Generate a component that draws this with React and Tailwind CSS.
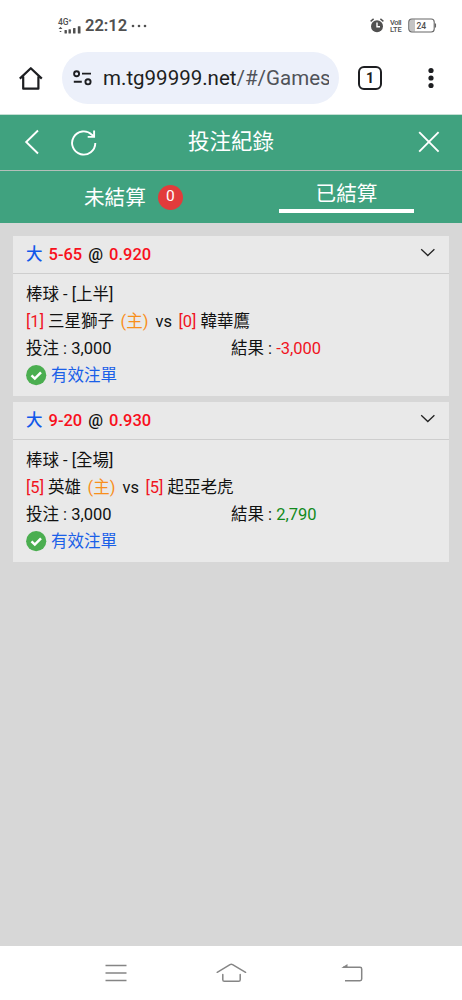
import React from "react";

const bets = [
  {
    line: "5-65",
    odds: "0.920",
    league: "棒球 - [上半]",
    homeScore: "[1]",
    home: "三星獅子",
    awayScore: "[0]",
    away: "韓華鷹",
    stake: "3,000",
    result: "-3,000",
    won: false,
  },
  {
    line: "9-20",
    odds: "0.930",
    league: "棒球 - [全場]",
    homeScore: "[5]",
    home: "英雄",
    awayScore: "[5]",
    away: "起亞老虎",
    stake: "3,000",
    result: "2,790",
    won: true,
  },
];

function StatusBar() {
  return (
    <div className="flex h-[52px] shrink-0 items-center justify-between pr-[25px] pb-[1px] pl-[58px] text-[#505050]">
      <div className="flex items-center">
        <div className="flex w-[24px] flex-col">
          <span className="h-[8px] text-[8.5px] leading-[8px] font-medium tracking-[-0.2px]">4G⁺</span>
          <svg width="24" height="8" viewBox="0 0 24 8" fill="currentColor">
            <path d="M.5 3 2.5.8 4.5 3zM1.7 5h1.6v1H1.7z" />
            <rect x="6.5" y="4" width="2.4" height="3.5" rx=".5" />
            <rect x="10.5" y="3.2" width="2.4" height="4.3" rx=".5" />
            <rect x="15" y="2" width="2.5" height="5.5" rx=".5" />
            <rect x="19.8" y=".3" width="2.7" height="7.2" rx=".5" />
          </svg>
        </div>
        <span className="ml-[3px] text-[16.5px] leading-5 font-semibold">22:12</span>
        <svg className="ml-[4px]" width="16" height="4" viewBox="0 0 16 4" fill="currentColor">
          <circle cx="2" cy="2" r="1.3" />
          <circle cx="8" cy="2" r="1.3" />
          <circle cx="14" cy="2" r="1.3" />
        </svg>
      </div>
      <div className="flex items-center">
        <svg width="14" height="15" viewBox="0 0 14 15" fill="none">
          <circle cx="7" cy="8.2" r="6" fill="currentColor" />
          <path d="M.6 3.4 3.6.9M13.4 3.4 10.4.9" stroke="currentColor" strokeWidth="1.4" />
          <path d="M7 4.5v4.2h3" stroke="#fff" strokeWidth="1.4" />
        </svg>
        <div className="ml-[6px] flex w-[14px] flex-col text-[7.5px] leading-[7px] font-medium">
          <span className="tracking-[-0.5px]">VoII</span>
          <span className="tracking-[-0.1px]">LTE</span>
        </div>
        <svg className="ml-[4px]" width="29" height="15" viewBox="0 0 29 15">
          <rect x="1.5" y="1.5" width="5.5" height="12" fill="#c4c4c4" />
          <rect x=".8" y="1" width="25.4" height="13" rx="3" fill="none" stroke="#666" strokeWidth="1.1" />
          <path d="M27.4 5.5v4" stroke="#666" strokeWidth="1.3" />
          <text x="13.3" y="10.6" textAnchor="middle" fontSize="8.6" fontWeight="500" fill="#505050">24</text>
        </svg>
      </div>
    </div>
  );
}

function BrowserBar() {
  return (
    <div className="flex h-[62px] shrink-0 items-start text-[#1d1e21]">
      <svg className="mt-[14px] ml-[18px]" width="25" height="25" viewBox="0 0 25 25" fill="none" stroke="currentColor" strokeWidth="2.2">
        <path d="M1.8 12.6 12.8 2.2 23.8 12.6M5.2 10.5v12.2h15.2V10.5" strokeLinejoin="round" />
      </svg>
      <div className="ml-[19px] flex h-[52px] w-[277px] items-center rounded-full bg-[#ecf0fa] pl-[11px]">
        <svg width="20" height="18" viewBox="0 0 20 18" fill="none" stroke="currentColor" strokeWidth="1.9">
          <circle cx="3.6" cy="4.8" r="2.5" />
          <path d="M9 4.6h9M.8 12.8h8" />
          <circle cx="15" cy="12.8" r="2.6" />
        </svg>
        <span className="ml-[10px] w-[226px] overflow-hidden text-[20.5px] leading-7 whitespace-nowrap">
          m.tg99999.net<span className="text-[#505359]">/#/Games</span>
        </span>
      </div>
      <div className="mt-[14px] ml-[19px] flex size-[24px] items-center justify-center rounded-[6px] border-[2.4px] border-current text-[14px] leading-none font-bold">
        1
      </div>
      <svg className="mt-[15px] ml-[46px]" width="6" height="22" viewBox="0 0 6 22" fill="currentColor">
        <circle cx="3" cy="3.5" r="2.6" />
        <circle cx="3" cy="11" r="2.6" />
        <circle cx="3" cy="18.5" r="2.6" />
      </svg>
    </div>
  );
}

function PageHeader() {
  return (
    <div className="flex h-[57px] shrink-0 items-center border-t border-b border-t-[#c4dfd4] border-b-[#b4bfba] bg-[#40a27f] pb-[1px] text-white">
      <svg className="ml-[24px]" width="16" height="26" viewBox="0 0 16 26" fill="none" stroke="currentColor" strokeWidth="1.9">
        <path d="M14 1.5 2.2 13 14 24.5" />
      </svg>
      <svg className="ml-[30px]" width="28" height="27" viewBox="0 0 28 27" fill="none" stroke="currentColor" strokeWidth="1.9">
        <path d="M25.3 14a11.6 11.6 0 1 1-3.4-8.2l2 1.8" />
        <path d="M24.1 1.5v6.4h-6.4" />
      </svg>
      <h1 className="ml-[90px] text-[21.5px] leading-8 font-normal">投注紀錄</h1>
      <svg className="ml-[144px]" width="22" height="22" viewBox="0 0 22 22" fill="none" stroke="currentColor" strokeWidth="1.9">
        <path d="m1.2 1.2 19.4 19.4M20.6 1.2 1.2 20.6" />
      </svg>
    </div>
  );
}

function Tabs() {
  return (
    <div className="grid h-[52px] shrink-0 grid-cols-2 bg-[#40a27f] text-[20.6px] leading-[30px] text-white">
      <div className="flex items-center pl-[84px]">
        <span className="pt-[1px]">未結算</span>
        <span className="ml-[12px] flex size-[25px] items-center justify-center rounded-full bg-[#e23b3b] text-[15.5px] leading-none">0</span>
      </div>
      <div className="flex flex-col items-center pt-[8px]">
        <span className="h-[30px]">已結算</span>
        <span className="h-[4px] w-[135px] bg-white" />
      </div>
    </div>
  );
}

function BetCard({ bet }) {
  return (
    <article className="bg-[#e9e9e9] px-[13px] text-[16.5px] leading-[27px] text-[#111]">
      <header className="-mx-[13px] flex h-[38px] items-center border-b border-[#cecece] px-[13px] font-medium">
        <span className="text-[#1158ea]">大</span>
        <span className="ml-[6px] text-[#f8101c]">{bet.line}</span>
        <span className="ml-[6px]">@</span>
        <span className="ml-[6px] text-[#f8101c]">{bet.odds}</span>
        <svg className="mb-[4px] ml-auto" width="16" height="10" viewBox="0 0 16 10" fill="none" stroke="#222" strokeWidth="1.3">
          <path d="m1.2 1.2 6.6 6.3 6.6-6.3" />
        </svg>
      </header>
      <div className="pt-[7px] pb-[7px]">
        <p>{bet.league}</p>
        <p className="flex">
          <span className="text-[#f0141e]">{bet.homeScore}</span>
          <span className="ml-[4px]">{bet.home}</span>
          <span className="ml-[6.5px] text-[#f88f1c]">(主)</span>
          <span className="ml-[7px]">vs</span>
          <span className="ml-[6.5px] text-[#f0141e]">{bet.awayScore}</span>
          <span className="ml-[4px]">{bet.away}</span>
        </p>
        <p className="grid grid-cols-2">
          <span>投注 : {bet.stake}</span>
          <span>
            結果 : <span className={bet.won ? "text-[#128a1c]" : "text-[#f0141e]"}>{bet.result}</span>
          </span>
        </p>
        <p className="flex items-center text-[#1a60e8]">
          <svg width="21" height="21" viewBox="0 0 21 21">
            <circle cx="10.2" cy="10.2" r="10.1" fill="#4bae50" />
            <path d="m5.5 10.4 3.3 3.2 6.2-6.3" fill="none" stroke="#fff" strokeWidth="2.5" />
          </svg>
          <span className="ml-[4px]">有效注單</span>
        </p>
      </div>
    </article>
  );
}

function NavBar() {
  return (
    <nav className="flex h-[54px] shrink-0 items-center bg-white text-[#858585]">
      <svg className="ml-[105px]" width="22" height="18" viewBox="0 0 22 18" stroke="currentColor" strokeWidth="1.5">
        <path d="M.5 1.5h21M.5 9h21M.5 16.5h21" />
      </svg>
      <svg className="ml-[89px]" width="31" height="20" viewBox="0 0 31 20" fill="none" stroke="currentColor" strokeWidth="1.5" strokeLinecap="round" strokeLinejoin="round">
        <path d="m1.2 9.3 12.8-7.6q1.3-.7 2.6 0l13 7.6M6.8 11.5v5.2q0 1.6 1.6 1.6h14.2q1.6 0 1.6-1.6v-5.2" />
      </svg>
      <svg className="mb-[1px] ml-[94px]" width="22" height="19" viewBox="0 0 22 19" fill="none" stroke="currentColor" strokeWidth="1.5">
        <path d="M2 4.3h17q1.7 0 1.7 1.7v10q0 1.7-1.7 1.7H4" />
        <path d="M.3 4.9 6.5 1v3.9z" fill="currentColor" stroke="none" />
      </svg>
    </nav>
  );
}

export default function App() {
  return (
    <div className="flex h-[1000px] w-[462px] flex-col overflow-hidden bg-white font-['Roboto','Noto_Sans_CJK_TC',sans-serif]">
      <StatusBar />
      <BrowserBar />
      <PageHeader />
      <Tabs />
      <main className="flex flex-1 flex-col gap-[6px] bg-[#d7d7d7] px-[13px] pt-[13px]">
        {bets.map((bet) => (
          <BetCard key={bet.line} bet={bet} />
        ))}
      </main>
      <NavBar />
    </div>
  );
}
